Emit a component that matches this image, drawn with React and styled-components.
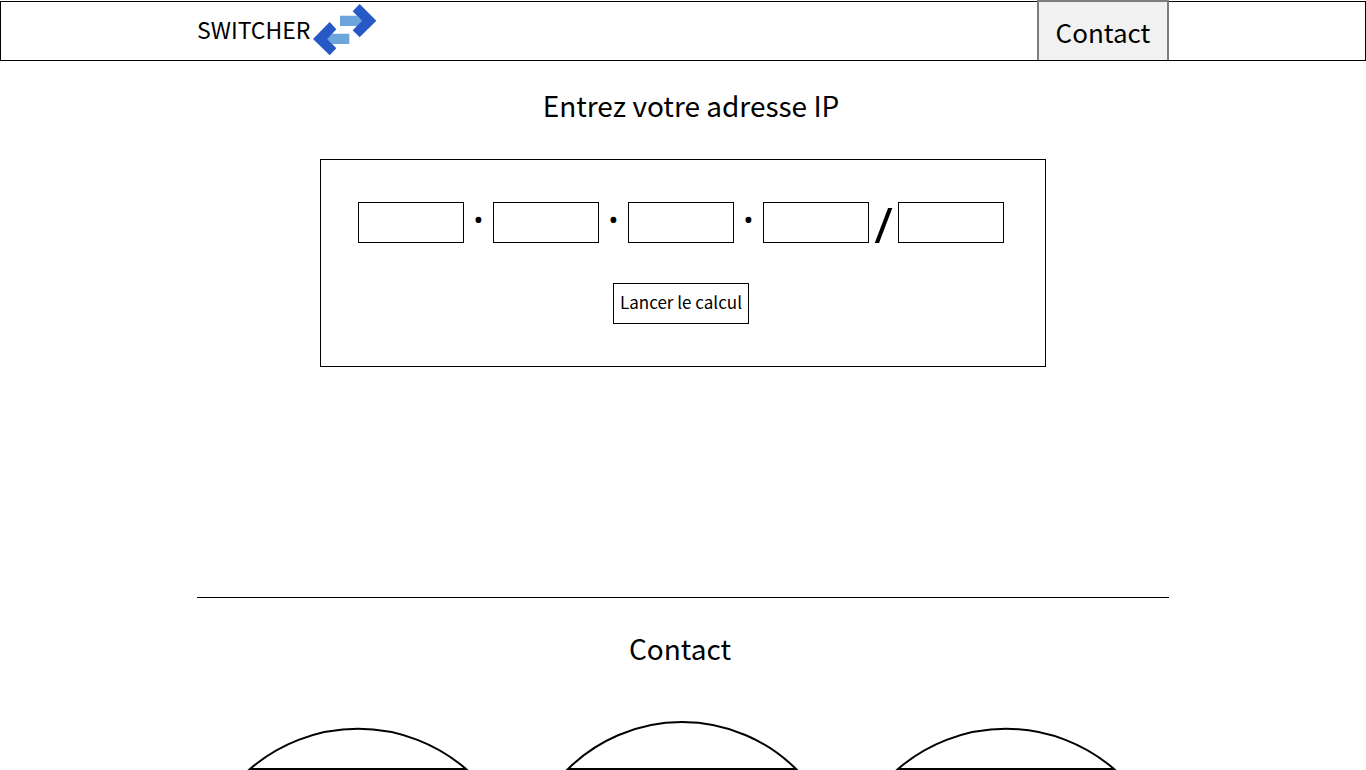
import React from "react";
import styled, { createGlobalStyle } from "styled-components";

const GlobalStyle = createGlobalStyle`
  *, *::before, *::after { box-sizing: border-box; }
  body {
    margin: 0;
    background: #fff;
    color: #000;
    font-family: "Noto Sans CJK SC", "Noto Sans", sans-serif;
  }
`;

const Page = styled.div`
  padding-top: 1px;
  overflow: hidden;
`;

const Header = styled.header`
  height: 60px;
  border: 1px solid #000;
`;

const Container = styled.div`
  max-width: 972px;
  margin: 0 auto;
`;

const HeaderBar = styled(Container)`
  display: flex;
  justify-content: space-between;
  height: 58px;
`;

const Brand = styled.a`
  display: flex;
  align-items: flex-start;
  gap: 3px;
  color: inherit;
  text-decoration: none;
  font-size: 23px;
  line-height: 54px;
`;

const Logo = styled.svg`
  width: 64px;
  height: 52px;
  margin-top: 2px;
`;

const Tab = styled.a`
  width: 132px;
  margin-top: -2px;
  border: 2px solid #7d7d7d;
  border-bottom: 0;
  background: #f1f1f1;
  color: inherit;
  text-align: center;
  text-decoration: none;
  font-size: 26px;
  line-height: 60px;
`;

const Title = styled.h1`
  margin: 0;
  padding: 24px 0 34px 16px;
  text-align: center;
  font-size: 28px;
  font-weight: 400;
  line-height: 40px;
`;

const Form = styled.form`
  display: flex;
  flex-direction: column;
  align-items: center;
  gap: 40px;
  max-width: 726px;
  margin: 0 auto;
  padding: 42px 41px 42px 37px;
  border: 1px solid #000;
`;

const Address = styled.div`
  display: flex;
  width: 100%;
`;

const Octet = styled.input`
  flex: 1;
  min-width: 0;
  height: 41px;
  padding: 0 8px;
  border: 1px solid #000;
  border-radius: 0;
  background: #fff;
  font: inherit;
  font-size: 18px;
  text-align: center;
`;

const Separator = styled.span`
  width: 29px;
  height: 41px;
  text-align: center;
  font-family: "Noto Sans", sans-serif;
  font-size: ${(p) => (p.$slash ? 50 : 26)}px;
  line-height: ${(p) => (p.$slash ? 44 : 34)}px;
`;

const Submit = styled.button`
  width: 136px;
  height: 41px;
  padding: 0 0 4px;
  border: 1px solid #000;
  border-radius: 0;
  background: #fff;
  color: inherit;
  font: inherit;
  font-size: 17px;
  line-height: 34px;
`;

const ContactSection = styled(Container).attrs({ as: "section" })`
  margin-top: 230px;
  border-top: 1px solid #000;
`;

const SectionTitle = styled.h2`
  margin: 0;
  padding: 30px 6px 53px 0;
  text-align: center;
  font-size: 28px;
  font-weight: 400;
  line-height: 40px;
`;

const Portraits = styled.div`
  display: flex;
  justify-content: space-between;
  align-items: flex-end;
  padding: 0 52px 0 50px;
`;

const Arch = styled.svg`
  display: block;
  fill: none;
  stroke: #000;
  stroke-width: 2;
`;

const SideArch = () => (
  <Arch width="222" height="43" viewBox="0 0 222 43" aria-hidden="true">
    <path d="M3 42 A165 165 0 0 1 219 42 Z" />
  </Arch>
);

const MiddleArch = () => (
  <Arch width="234" height="49" viewBox="0 0 234 49" aria-hidden="true">
    <path d="M3 48 A162 162 0 0 1 231 48 Z" />
  </Arch>
);

const octets = ["Premier octet", "Deuxième octet", "Troisième octet", "Quatrième octet"];

export default function App() {
  return (
    <Page>
      <GlobalStyle />
      <Header>
        <HeaderBar>
          <Brand href="#">
            SWITCHER
            <Logo viewBox="402 12 192 156" aria-hidden="true">
              <path fill="#6ca5dc" d="M483 47H534L550 62L534 78H483Z" />
              <path fill="#2659c5" d="M542 12L592 62L542 112L521 91L549 62L521 34Z" />
              <path fill="#6ca5dc" d="M511 101H460L444 117L460 132H511Z" />
              <path fill="#2659c5" d="M452 66L402 117L452 166L472 145L445 117L472 88Z" />
            </Logo>
          </Brand>
          <Tab href="#contact">Contact</Tab>
        </HeaderBar>
      </Header>
      <main>
        <Title>Entrez votre adresse IP</Title>
        <Form onSubmit={(e) => e.preventDefault()}>
          <Address>
            {octets.map((label, i) => (
              <React.Fragment key={label}>
                <Octet aria-label={label} inputMode="numeric" maxLength={3} />
                <Separator $slash={i === 3}>{i === 3 ? "/" : "•"}</Separator>
              </React.Fragment>
            ))}
            <Octet aria-label="Masque" inputMode="numeric" maxLength={2} />
          </Address>
          <Submit type="submit">Lancer le calcul</Submit>
        </Form>
        <ContactSection id="contact">
          <SectionTitle>Contact</SectionTitle>
          <Portraits>
            <SideArch />
            <MiddleArch />
            <SideArch />
          </Portraits>
        </ContactSection>
      </main>
    </Page>
  );
}
